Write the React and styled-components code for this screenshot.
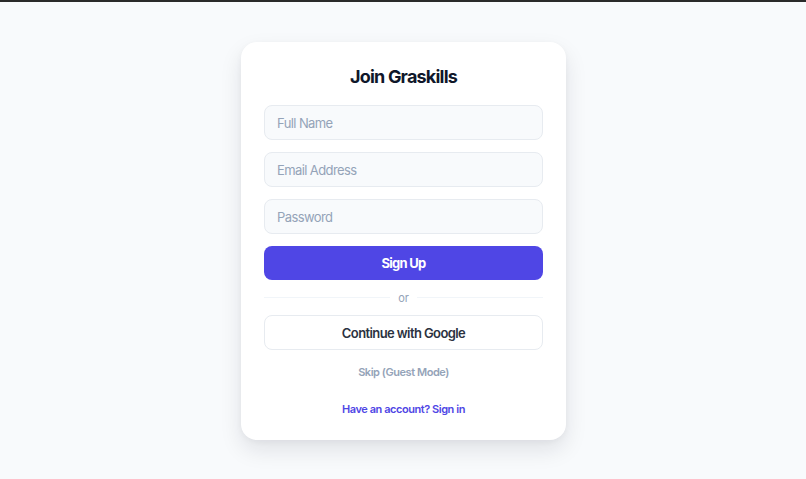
import React from "react";
import styled, { createGlobalStyle } from "styled-components";

const GlobalStyle = createGlobalStyle`
  * { box-sizing: border-box; }
  html, body { margin: 0; padding: 0; }
  body {
    background: #f8fafc;
    font-family: Inter, "Noto Sans", sans-serif;
    border-top: 2px solid #2a2a2a;
  }
`;

const Page = styled.div`
  min-height: 477px;
  display: flex;
  justify-content: center;
  align-items: flex-start;
  padding-top: 40px;
  padding-left: 1px;
`;

const Card = styled.div`
  width: 325px;
  background: #fff;
  border-radius: 16px;
  padding: 23px;
  box-shadow: 0 10px 22px rgba(15, 23, 42, 0.1), 0 2px 6px rgba(15, 23, 42, 0.04);
  display: flex;
  flex-direction: column;
`;

const Title = styled.h1`
  margin: 0 0 16px;
  font-size: 18px;
  line-height: 24px;
  font-weight: 700;
  letter-spacing: -0.8px;
  text-align: center;
  color: #0f172a;
`;

const Fields = styled.div`
  display: flex;
  flex-direction: column;
  gap: 12px;
`;

const Input = styled.input`
  height: 35px;
  width: 100%;
  padding: 0 12px;
  border: 1px solid #e7ebf0;
  border-radius: 8px;
  background: #f8fafc;
  font-family: inherit;
  font-size: 13px;
  letter-spacing: -0.6px;
  color: #0f172a;
  outline: none;

  &::placeholder {
    color: #94a3b8;
  }
`;

const PrimaryButton = styled.button`
  margin-top: 12px;
  height: 34px;
  border: none;
  border-radius: 8px;
  background: #4f46e5;
  color: #fff;
  font-family: inherit;
  font-size: 13px;
  font-weight: 700;
  letter-spacing: -0.7px;
  cursor: pointer;
`;

const Divider = styled.div`
  margin: 12px 0;
  height: 11px;
  display: flex;
  align-items: center;
  gap: 8px;
  font-size: 11px;
  color: #94a3b8;

  &::before,
  &::after {
    content: "";
    flex: 1;
    height: 1px;
    background: #f1f5f9;
  }
`;

const OutlineButton = styled.button`
  height: 35px;
  border: 1px solid #e7ebf0;
  border-radius: 8px;
  background: #fff;
  color: #2b3240;
  font-family: inherit;
  font-size: 13px;
  font-weight: 600;
  letter-spacing: -0.6px;
  cursor: pointer;
`;

const TextLink = styled.a`
  display: block;
  text-align: center;
  font-size: 11px;
  line-height: 16px;
  font-weight: 600;
  letter-spacing: -0.45px;
  text-decoration: none;
  cursor: pointer;
  color: ${(props) => (props.$muted ? "#94a3b8" : "#4f46e5")};
  margin-top: ${(props) => (props.$muted ? "14px" : "21px")};
`;

const App = () => {
  return (
    <>
      <GlobalStyle />
      <Page>
        <Card>
          <Title>Join Graskills</Title>
          <Fields>
            <Input type="text" placeholder="Full Name" />
            <Input type="email" placeholder="Email Address" />
            <Input type="password" placeholder="Password" />
          </Fields>
          <PrimaryButton>Sign Up</PrimaryButton>
          <Divider>or</Divider>
          <OutlineButton>Continue with Google</OutlineButton>
          <TextLink $muted>Skip (Guest Mode)</TextLink>
          <TextLink>Have an account? Sign in</TextLink>
        </Card>
      </Page>
    </>
  );
};

export default App;
